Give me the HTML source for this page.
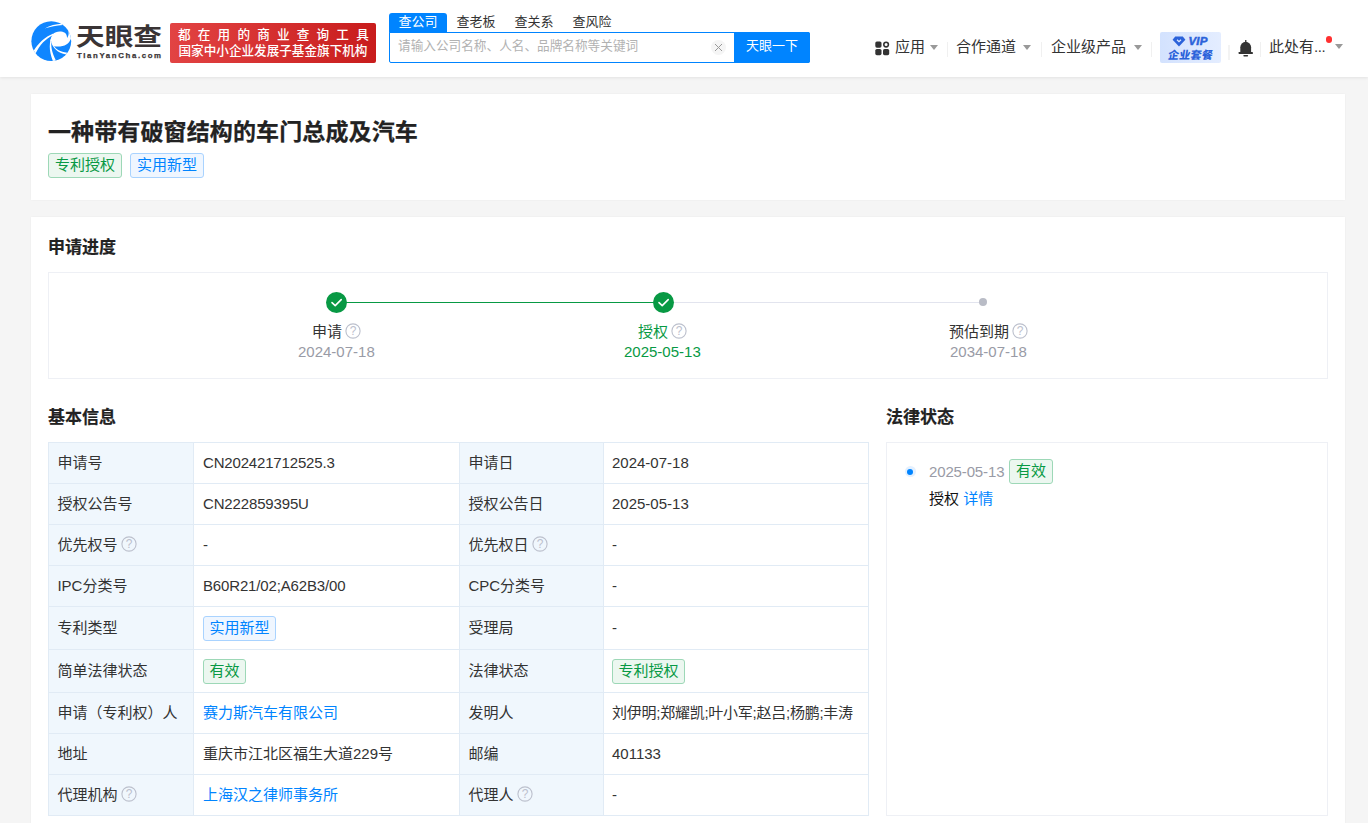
<!DOCTYPE html>
<html lang="zh-CN">
<head>
<meta charset="utf-8">
<title>一种带有破窗结构的车门总成及汽车 - 天眼查</title>
<style>
*{box-sizing:border-box;margin:0;padding:0}
html,body{width:1368px;height:823px;overflow:hidden;background:#f5f5f5}
body{font-family:"Liberation Sans","Noto Sans CJK SC",sans-serif;font-size:15px;color:#333;position:relative}
.abs{position:absolute}
#hdr{position:absolute;left:0;top:0;width:1368px;height:77px;background:#fff;box-shadow:0 1px 3px rgba(0,0,0,.08)}
.card{position:absolute;background:#fff;left:31px;width:1314px;box-shadow:0 0 2px rgba(0,0,0,.05)}
.t{position:absolute;white-space:nowrap;line-height:1}
.tag{position:absolute;border:1px solid;border-radius:3px;font-size:15px;line-height:21px;height:25px;text-align:center;white-space:nowrap}
.tag.g{color:#089944;background:#ecf7f0;border-color:#9dd8b7}
.tag.b{color:#0084ff;background:#eff6ff;border-color:#a9d3ff}
.sec{position:absolute;font-size:17px;font-weight:bold;color:#222;-webkit-text-stroke:.2px #222;line-height:1;white-space:nowrap}
.sep{position:absolute;width:1px;background:#f0f0f0}
.arr{position:absolute;width:0;height:0;border-left:4px solid transparent;border-right:4px solid transparent;border-top:5px solid #999}
.nav{position:absolute;white-space:nowrap;line-height:1;font-size:15px;color:#333;top:39px}
.tab{position:absolute;top:13px;height:20px;width:58px;text-align:center;font-size:13px;line-height:17px;color:#333}
.tab.on{background:#0084ff;color:#fff;border-radius:3px 3px 0 0}
table{position:absolute;left:48px;top:442px;border-collapse:collapse;table-layout:fixed;width:820px}
td{border:1px solid #e1ebf5;height:41px;padding:0 0 0 9px;font-size:15px;line-height:20px;white-space:nowrap;vertical-align:middle;color:#333;position:relative}
td.l{background:#f0f7fd;padding-left:8.4px}
td.v2{padding-left:8px}
tr.h td{height:43px}
td a, a{color:#0084ff;text-decoration:none}
td .tg{display:inline-block;border:1px solid;border-radius:3px;font-size:15px;line-height:21px;height:25px;padding:0 5.5px;vertical-align:middle}
td .tg.g{color:#089944;background:#ecf7f0;border-color:#9dd8b7}
td .tg.b{color:#0084ff;background:#eff6ff;border-color:#a9d3ff}
.q{display:inline-block;vertical-align:middle;margin-left:3.5px;position:relative;top:-1.6px}
</style>
</head>
<body>

<div id="hdr">
<svg class="abs" style="left:26px;top:16px" width="52" height="52" viewBox="0 0 823 823">
<defs><clipPath id="lc"><circle cx="400" cy="398" r="315"/></clipPath></defs>
<circle cx="400" cy="398" r="315" fill="#1086ff"/>
<g clip-path="url(#lc)" fill="#fff" stroke="none">
<path d="M425 287 C470 238 560 230 615 266 C640 286 650 318 650 347 C668 325 682 290 670 232 L770 232 L770 384 L706 366 C680 440 600 497 445 480 L432 476 C414 452 404 425 402 398 L382 402 C390 360 403 320 425 287 Z"/>
<path d="M296 198 C380 150 470 124 570 122 L584 142 C480 150 390 168 296 198 Z"/>
<path d="M432 278 C300 332 195 428 116 558 L152 594 C215 455 315 358 432 300 Z"/>
<path d="M424 292 C364 400 354 540 430 724 L474 704 C402 560 392 470 406 390 Z"/>
<path d="M400 398 C420 502 500 584 638 610 L654 580 C540 570 470 528 442 472 Z"/>
</g>
</svg>
<svg class="abs" style="left:76px;top:20px" width="90" height="42" viewBox="0 0 90 42">
<text x="0" y="24.9" font-family="Noto Sans CJK SC, sans-serif" font-weight="700" font-size="24.2" fill="#3a3435" textLength="86" lengthAdjust="spacingAndGlyphs">天眼查</text>
<text x="1" y="38.2" font-family="Liberation Sans, sans-serif" font-weight="bold" font-size="7.8" fill="#3a3435" stroke="#3a3435" stroke-width=".25" textLength="84" lengthAdjust="spacing">TianYanCha.com</text>
</svg>
<div class="abs" style="left:170px;top:23px;width:206px;height:40px;border-radius:2px;background:linear-gradient(90deg,#e24343,#c81c1c);color:#fff;font-size:12.6px;font-weight:500">
<div class="t" style="left:8px;top:5.5px;letter-spacing:7.2px">都在用的商业查询工具</div>
<div class="t" style="left:8.5px;top:21.5px;letter-spacing:0">国家中小企业发展子基金旗下机构</div>
</div>
<div class="tab on" style="left:389px">查公司</div>
<div class="tab" style="left:447px">查老板</div>
<div class="tab" style="left:505px">查关系</div>
<div class="tab" style="left:563px">查风险</div>
<div class="abs" style="left:389px;top:32px;width:421px;height:31px;border:1px solid #0084ff;border-radius:0 2px 2px 2px;background:#fff"></div>
<div class="t" style="left:398px;top:39.5px;font-size:12.65px;color:#b2b2b2">请输入公司名称、人名、品牌名称等关键词</div>
<div class="abs" style="left:711px;top:40px;width:15px;height:15px;border-radius:50%;background:#f5f5f5"></div>
<svg class="abs" style="left:714px;top:43px" width="9" height="9" viewBox="0 0 9 9"><path d="M1 1L8 8M8 1L1 8" stroke="#999" stroke-width="1" fill="none"/></svg>
<div class="abs" style="left:734px;top:32px;width:76px;height:31px;background:#0084ff;border-radius:0 2px 2px 0"></div>
<div class="t" style="left:746px;top:39px;font-size:13px;color:#fff">天眼一下</div>

<svg class="abs" style="left:875px;top:41px" width="15" height="15" viewBox="0 0 15 15"><rect x="0.3" y="0.5" width="6.2" height="6.2" rx="1.6" fill="#333"/><rect x="0.3" y="8" width="6.2" height="6.2" rx="1.6" fill="#333"/><rect x="8" y="8" width="6.2" height="6.2" rx="1.6" fill="#333"/><circle cx="11.1" cy="3.6" r="2.3" fill="none" stroke="#333" stroke-width="1.6"/></svg>
<div class="nav" style="left:895px">应用</div>
<div class="arr" style="left:930px;top:45px"></div>
<div class="sep" style="left:947px;top:42px;height:15px"></div>
<div class="nav" style="left:956px">合作通道</div>
<div class="arr" style="left:1023px;top:45px"></div>
<div class="sep" style="left:1041px;top:42px;height:15px"></div>
<div class="nav" style="left:1051px">企业级产品</div>
<div class="arr" style="left:1134px;top:45px"></div>
<div class="sep" style="left:1151px;top:42px;height:15px"></div>
<div class="abs" style="left:1160px;top:32px;width:61px;height:31px;border-radius:2px;background:linear-gradient(90deg,#d3e2fe,#e4edff)"></div>
<svg class="abs" style="left:1172px;top:36px" width="14" height="11" viewBox="0 0 14 11"><path d="M3.2 0.6H10.8L13.4 3.8L7 10.4L0.6 3.8Z" fill="#2b62da"/><path d="M5 3.7L7 5.6L9 3.7" fill="none" stroke="#dfe9ff" stroke-width="1.2"/></svg>
<div class="t" style="left:1188.5px;top:36px;font-size:11.5px;font-weight:bold;font-style:italic;color:#2b62da;letter-spacing:.2px;-webkit-text-stroke:.5px #2b62da">VIP</div>
<div class="t" style="left:1167.5px;top:50px;font-size:11px;font-weight:900;transform:skewX(-9deg);color:#2b62da;letter-spacing:.3px">企业套餐</div>
<div class="sep" style="left:1228px;top:45px;height:15px;width:2px;background:#f3f3f3"></div>
<svg class="abs" style="left:1237px;top:39px" width="18" height="19" viewBox="0 0 18 19"><rect x="8.1" y="1" width="1.3" height="2.4" fill="#333"/><path d="M3.3 13.2V8.2A5.4 5.4 0 0 1 14.1 8.2V13.2Z" fill="#333"/><rect x="1.6" y="13" width="14.3" height="1.9" rx=".4" fill="#333"/><rect x="6.3" y="16" width="4.8" height="1.5" rx=".75" fill="#333"/></svg>
<div class="sep" style="left:1260px;top:42px;height:15px"></div>
<div class="nav" style="left:1269px">此处有<span style="letter-spacing:-.45px">...</span></div>
<div class="abs" style="left:1325.5px;top:36px;width:6.5px;height:6.5px;border-radius:50%;background:#ff3030"></div>
<div class="arr" style="left:1334.5px;top:44px"></div>
</div>

<div class="card" style="top:94px;height:106px"></div>
<div class="t" style="left:48px;top:121px;font-size:23px;font-weight:bold;color:#222;letter-spacing:.12px;-webkit-text-stroke:.25px #222">一种带有破窗结构的车门总成及汽车</div>
<div class="tag g" style="left:48px;top:153px;width:74px">专利授权</div>
<div class="tag b" style="left:130px;top:153px;width:74px">实用新型</div>

<div class="card" style="top:217px;height:640px"></div>
<div class="sec" style="left:48px;top:238.5px">申请进度</div>
<div class="abs" style="left:48px;top:272px;width:1280px;height:107px;border:1px solid #eef0f5"></div>
<div class="abs" style="left:337px;top:302px;width:326px;height:1px;background:#089944"></div>
<div class="abs" style="left:663px;top:302px;width:320px;height:1px;background:#e2e4ee"></div>
<div class="abs" style="left:326.0px;top:291.5px;width:21px;height:21px;border-radius:50%;background:#089944"></div><svg class="abs" style="left:326.0px;top:291.5px" width="21" height="21" viewBox="0 0 21 21"><path d="M6 10.6L9.2 13.6L15.2 7.6" fill="none" stroke="#fff" stroke-width="1.6" stroke-linecap="round" stroke-linejoin="round"/></svg>
<div class="abs" style="left:653.0px;top:291.5px;width:21px;height:21px;border-radius:50%;background:#089944"></div><svg class="abs" style="left:653.0px;top:291.5px" width="21" height="21" viewBox="0 0 21 21"><path d="M6 10.6L9.2 13.6L15.2 7.6" fill="none" stroke="#fff" stroke-width="1.6" stroke-linecap="round" stroke-linejoin="round"/></svg>
<div class="abs" style="left:979px;top:298px;width:8px;height:8px;border-radius:50%;background:#b9bcc6"></div>
<div class="t" style="left:312px;top:324px">申请</div><svg class="abs" style="left:345px;top:323px" width="16" height="16" viewBox="0 0 16 16"><circle cx="8" cy="8" r="7.1" fill="none" stroke="#bcc0cd" stroke-width="1.1"/><text x="8" y="12.2" text-anchor="middle" font-family="Liberation Sans, sans-serif" font-size="12" fill="#bcc0cd">?</text></svg>
<div class="t" style="left:298px;top:343.5px;color:#999ba6">2024-07-18</div>
<div class="t" style="left:638px;top:324px;color:#089944">授权</div><svg class="abs" style="left:671px;top:323px" width="16" height="16" viewBox="0 0 16 16"><circle cx="8" cy="8" r="7.1" fill="none" stroke="#bcc0cd" stroke-width="1.1"/><text x="8" y="12.2" text-anchor="middle" font-family="Liberation Sans, sans-serif" font-size="12" fill="#bcc0cd">?</text></svg>
<div class="t" style="left:624px;top:343.5px;color:#089944">2025-05-13</div>
<div class="t" style="left:949px;top:324px">预估到期</div><svg class="abs" style="left:1012px;top:323px" width="16" height="16" viewBox="0 0 16 16"><circle cx="8" cy="8" r="7.1" fill="none" stroke="#bcc0cd" stroke-width="1.1"/><text x="8" y="12.2" text-anchor="middle" font-family="Liberation Sans, sans-serif" font-size="12" fill="#bcc0cd">?</text></svg>
<div class="t" style="left:950px;top:343.5px;color:#999ba6">2034-07-18</div>

<div class="sec" style="left:48px;top:409px">基本信息</div>
<div class="sec" style="left:886px;top:409px">法律状态</div>
<table>
<colgroup><col style="width:145px"><col style="width:266px"><col style="width:144px"><col style="width:265px"></colgroup>
<tr><td class="l">申请号</td><td style="letter-spacing:-.17px">CN202421712525.3</td><td class="l">申请日</td><td class="v2">2024-07-18</td></tr>
<tr><td class="l">授权公告号</td><td style="letter-spacing:-.15px">CN222859395U</td><td class="l">授权公告日</td><td class="v2">2025-05-13</td></tr>
<tr><td class="l">优先权号<span class="q"><svg style="display:block" width="16" height="16" viewBox="0 0 16 16"><circle cx="8" cy="8" r="7.1" fill="none" stroke="#bcc0cd" stroke-width="1.1"/><text x="8" y="12.2" text-anchor="middle" font-family="Liberation Sans, sans-serif" font-size="12" fill="#bcc0cd">?</text></svg></span></td><td>-</td><td class="l">优先权日<span class="q"><svg style="display:block" width="16" height="16" viewBox="0 0 16 16"><circle cx="8" cy="8" r="7.1" fill="none" stroke="#bcc0cd" stroke-width="1.1"/><text x="8" y="12.2" text-anchor="middle" font-family="Liberation Sans, sans-serif" font-size="12" fill="#bcc0cd">?</text></svg></span></td><td class="v2">-</td></tr>
<tr><td class="l">IPC分类号</td><td style="letter-spacing:-.15px">B60R21/02;A62B3/00</td><td class="l">CPC分类号</td><td class="v2">-</td></tr>
<tr class="h"><td class="l">专利类型</td><td><span class="tg b">实用新型</span></td><td class="l">受理局</td><td class="v2">-</td></tr>
<tr class="h"><td class="l">简单法律状态</td><td><span class="tg g">有效</span></td><td class="l">法律状态</td><td class="v2"><span class="tg g">专利授权</span></td></tr>
<tr><td class="l">申请（专利权）人</td><td><a>赛力斯汽车有限公司</a></td><td class="l">发明人</td><td class="v2" style="letter-spacing:-.25px">刘伊明;郑耀凯;叶小军;赵吕;杨鹏;丰涛</td></tr>
<tr><td class="l">地址</td><td>重庆市江北区福生大道229号</td><td class="l">邮编</td><td class="v2">401133</td></tr>
<tr><td class="l">代理机构<span class="q"><svg style="display:block" width="16" height="16" viewBox="0 0 16 16"><circle cx="8" cy="8" r="7.1" fill="none" stroke="#bcc0cd" stroke-width="1.1"/><text x="8" y="12.2" text-anchor="middle" font-family="Liberation Sans, sans-serif" font-size="12" fill="#bcc0cd">?</text></svg></span></td><td><a>上海汉之律师事务所</a></td><td class="l">代理人<span class="q"><svg style="display:block" width="16" height="16" viewBox="0 0 16 16"><circle cx="8" cy="8" r="7.1" fill="none" stroke="#bcc0cd" stroke-width="1.1"/><text x="8" y="12.2" text-anchor="middle" font-family="Liberation Sans, sans-serif" font-size="12" fill="#bcc0cd">?</text></svg></span></td><td class="v2">-</td></tr>
</table>

<div class="abs" style="left:886px;top:442px;width:442px;height:374px;border:1px solid #eef0f5"></div>
<div class="abs" style="left:904.5px;top:466px;width:11px;height:11px;border-radius:50%;background:#e3f0ff"></div>
<div class="abs" style="left:907px;top:468.5px;width:6px;height:6px;border-radius:50%;background:#0084ff"></div>
<div class="t" style="left:929px;top:463.5px;color:#999ba6;letter-spacing:-.14px">2025-05-13</div>
<div class="tag g" style="left:1009px;top:459px;width:44px">有效</div>
<div class="t" style="left:929px;top:491px;color:#111">授权 <a>详情</a></div>

</body>
</html>
